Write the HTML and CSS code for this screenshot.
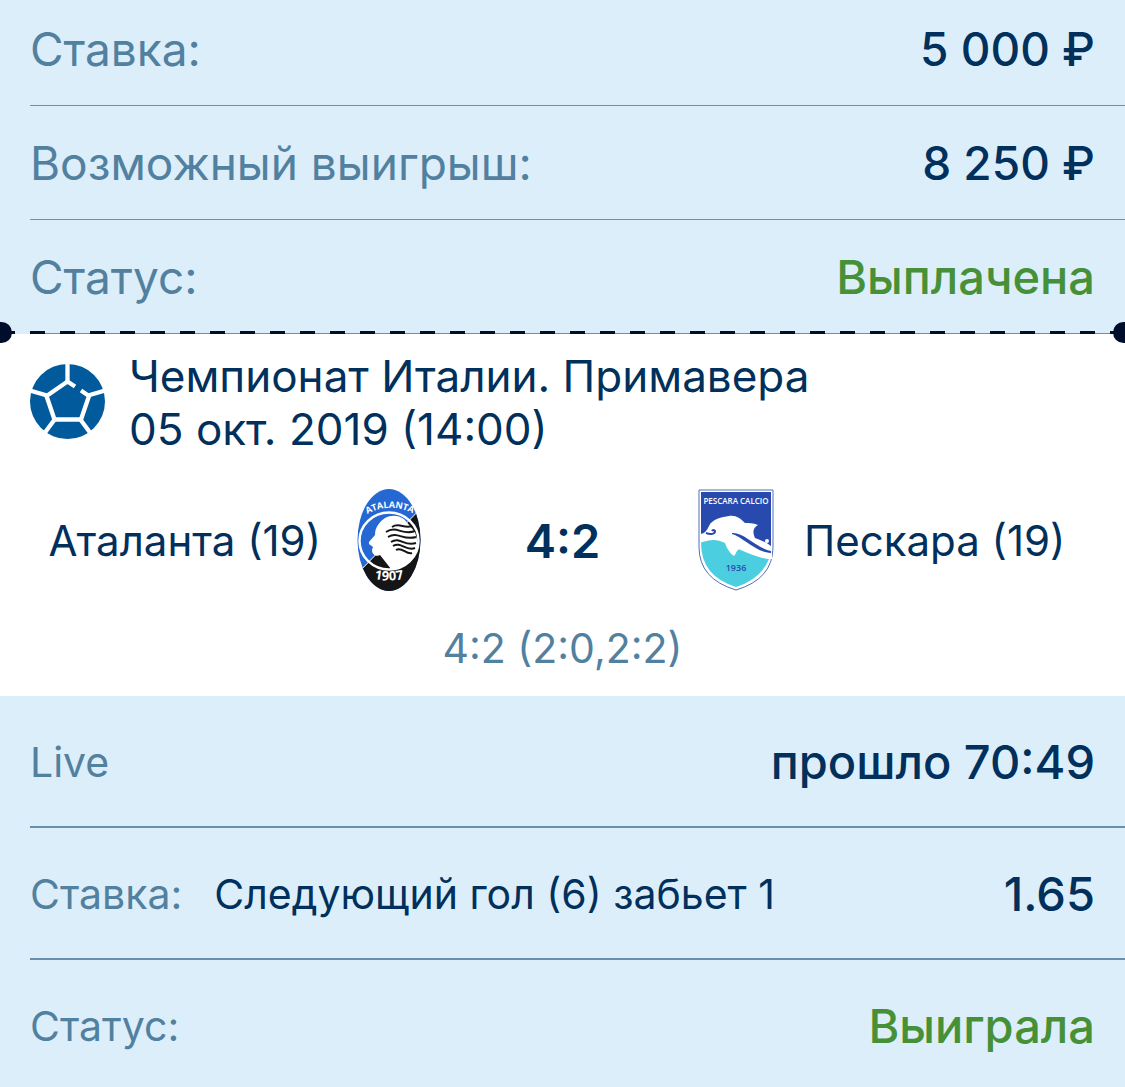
FILE: index.html
```html
<!DOCTYPE html>
<html lang="ru">

<head>
    <meta charset="UTF-8">
    <meta name="viewport" content="width=device-width, initial-scale=1">
    <title>Ставка</title>
    <link rel="stylesheet" href="styles.css">
</head>

<body>
    <dl class="summary">
        <div class="row">
            <dt>Ставка:</dt>
            <dd class="amount">5 000 ₽</dd>
        </div>
        <div class="row">
            <dt>Возможный выигрыш:</dt>
            <dd class="amount">8 250 ₽</dd>
        </div>
        <div class="row">
            <dt>Статус:</dt>
            <dd class="success">Выплачена</dd>
        </div>
    </dl>

    <div class="tear">
        <span class="hole hole-left"></span>
        <span class="hole hole-right"></span>
    </div>

    <main class="match">
        <div class="event">
            <svg class="ball" viewBox="0 0 75 75" aria-hidden="true">
                <circle cx="37.500" cy="37.500" r="37.500" fill="#005a9c"/>
                <g fill="none" stroke="#fff" stroke-width="4.300">
                    <path d="M45 22.500 37.500 17.500 16.500 32 24.500 55.500H51L59 32 51 26.500"/>
                    <path d="M37.500 0V18M0 26.500 17 31.500M75 26.500 58 31.500M15 68.500 25 55M60 68.500 50 55"/>
                </g>
            </svg>
            <div>
                <h1>Чемпионат Италии. Примавера</h1>
                <time datetime="2019-10-05T14:00">05 окт. 2019 (14:00)</time>
            </div>
        </div>

        <div class="teams">
            <span class="team home">Аталанта (19)</span>
            <svg class="crest" viewBox="0 0 76 104" aria-hidden="true">
                <defs>
                    <clipPath id="oval"><ellipse cx="38" cy="52" rx="31.500" ry="51"/></clipPath>
                    <path id="arc" d="M13 28Q38 12 65 27"/>
                    <path id="arc-low" d="M19 90Q38 95 57 90"/>
                </defs>
                <g clip-path="url(#oval)">
                    <path fill="#2568d4" d="M0 0h76v104H0z"/>
                    <path fill="#151515" d="M76 14 6 86V104H76z"/>
                    <path fill="none" stroke="#fff" d="M76 14 6 86"/>
                    <ellipse cx="38" cy="53" rx="29.500" ry="28.500" fill="none" stroke="#fff" stroke-width="2.500"/>
                </g>
                <path fill="#fff" d="M27 37C33 27 45 25 53 31L64 44 67 55C66 64 62 72 54 77C50 80 45 81 40 81L29 67C26 69 21 67 21 62L22 59 18 56 18 54 24 47Q24 41 27 37Z"/>
                <path fill="none" stroke="#151515" stroke-width="2" d="M41 39C48 34 53 41 61 38M35 44C46 37 51 48 64 43M37 49C47 43 52 53 65 49M40 54C49 48 53 59 65 55M42 58C50 53 55 64 64 60M45 62C51 58 55 67 61 65"/>
                <text class="arc-name"><textPath href="#arc" startOffset="50%">ATALANTA</textPath></text>
                <text class="arc-year"><textPath href="#arc-low" startOffset="50%">1907</textPath></text>
            </svg>
            <strong class="score">4:2</strong>
            <svg class="crest" viewBox="0 0 76 104" aria-hidden="true">
                <path fill="#fff" stroke="#536db9" d="M1 2H75V59Q75 91 38 102Q1 91 1 59Z"/>
                <path fill="#284aae" d="M3 4H73V60L3 51Z"/>
                <path fill="#4bcfe0" d="M3 50C18 48 27 53 35 58C50 66 60 69 71 71Q63 91 38 99Q3 88 3 55Z"/>
                <path fill="#fff" d="M2 46C7 46 9 42 11 38C14 31 24 29 31 28C38 27 42 30 47 35C51 35 55 35 60 37C54 40 55 46 57 50C63 52 70 55 74 59V71C63 71 52 66 43 61C38 61 39 65 36 68C31 65 28 58 27 55C18 50 10 52 2 55Z"/>
                <path fill="none" stroke="#284aae" stroke-width="2" d="M8 45C13 47 17 46 17 43Q15 41 14 43"/>
                <path fill="#284aae" d="M34 45C46 44 58 60 73 63V65C57 64 45 49 34 46Z"/>
                <circle cx="69" cy="53" r="2" fill="#fff"/>
                <text class="shield-name" x="38" y="16">PESCARA CALCIO</text>
                <text class="shield-year" x="38" y="83">1936</text>
            </svg>
            <span class="team">Пескара (19)</span>
        </div>

        <p class="periods">4:2 (2:0,2:2)</p>
    </main>

    <dl class="details">
        <div class="row">
            <dt>Live</dt>
            <dd>прошло 70:49</dd>
        </div>
        <div class="row">
            <dt>Ставка:</dt>
            <dd class="outcome">Следующий гол (6) забьет 1</dd>
            <dd>1.65</dd>
        </div>
        <div class="row">
            <dt>Статус:</dt>
            <dd class="success">Выиграла</dd>
        </div>
    </dl>
</body>

</html>
```

FILE: styles.css
```css
* {
    box-sizing: border-box;
}

body {
    margin: 0;
    background-color: #dceefa;
    color: #00305b;
    font-family: Inter, "Liberation Sans", sans-serif;
    font-size: 41px;
    overflow-x: hidden;
}

dl, dd, h1, p {
    margin: 0;
}

.row {
    display: flex;
    align-items: center;
    margin-left: 30px;
    padding-right: 30px;
    line-height: 56px;
}

.row dt {
    color: #52809f;
}

.row dd {
    margin-left: auto;
    font-size: 47px;
    font-weight: 500;
}

.row .amount {
    font-size: 46px;
}

.row .success {
    color: #469137;
}

.row .outcome {
    margin-left: 32px;
    font-size: 41px;
    font-weight: 400;
}

.summary .row {
    padding-top: 29px;
    padding-bottom: 28px;
    border-bottom: 1px solid #718eac;
    font-size: 46px;
}

.summary .row:first-child {
    padding-top: 21px;
}

/* perforated line between the coupon and the match */
.tear {
    position: relative;
    height: 3px;
    margin-top: -3px;
    background: repeating-linear-gradient(to right, #000e2b 0 15px, transparent 15px 30px);
}

.hole {
    position: absolute;
    top: -9px;
    width: 21px;
    height: 21px;
    border-radius: 50%;
    background-color: #000e2b;
}

.hole-left {
    left: -9px;
}

.hole-right {
    right: -9px;
}

.match {
    padding: 16px 0 20px;
    background-color: #fff;
}

.event {
    display: flex;
    gap: 24px;
    padding: 0 30px;
    font-size: 44px;
    line-height: 53px;
}

.event h1 {
    font-size: 44px;
    font-weight: 400;
}

.event time {
    display: block;
}

.ball {
    flex: none;
    width: 75px;
    height: 75px;
    margin-top: 14px;
}

.teams {
    display: grid;
    grid-template-columns: 1fr 76px 271px 76px 1fr;
    align-items: center;
    margin-top: 32px;
}

.team {
    padding: 0 30px;
    font-size: 42px;
    white-space: nowrap;
}

.home {
    text-align: right;
}

.score {
    font-size: 47px;
    font-weight: 600;
    text-align: center;
}

.crest {
    width: 76px;
    height: 104px;
}

.crest text {
    fill: #fff;
    font-family: "Open Sans", sans-serif;
    font-weight: 600;
    text-anchor: middle;
}

.crest .arc-name {
    font-size: 9px;
    font-weight: 700;
}

.crest .arc-year {
    font-size: 13px;
    font-weight: 700;
}

.crest .shield-name {
    font-size: 8px;
}

.crest .shield-year {
    fill: #284aae;
    font-size: 9px;
}

.periods {
    margin-top: 28px;
    color: #52809f;
    line-height: 56px;
    text-align: center;
}

.details .row {
    padding-top: 38px;
    padding-bottom: 36px;
    border-bottom: 2px solid #6890ad;
}

.details .row:last-child {
    padding-bottom: 33px;
    border-bottom: 0;
}
```
